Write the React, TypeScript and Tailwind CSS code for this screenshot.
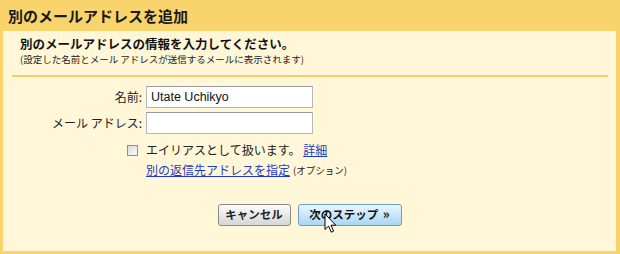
import React from "react";

const jp = "font-['Noto_Sans_CJK_JP','Noto_Sans',sans-serif]";
const link = "text-[#1f3bc6] underline";

/** Windows-style arrow pointer hovering over the primary button. */
function Pointer() {
  return (
    <svg
      className="pointer-events-none absolute left-[324px] top-[213px]"
      width="13"
      height="21"
      viewBox="0 0 13 21"
    >
      <path
        d="M1 1 L1 16.5 L4.6 13 L7.2 19.2 L9.6 18.2 L7 12.2 L11.8 12.2 Z"
        fill="#fff"
        stroke="#000"
        strokeWidth="1"
        strokeLinejoin="round"
      />
    </svg>
  );
}

function Field({ label, value }: { label: string; value?: string }) {
  return (
    <div className="flex items-center">
      <label className="w-[140px] pr-[1px] text-right text-[12px] text-[#222]">{label}</label>
      <input
        readOnly
        value={value ?? ""}
        className="ml-[3px] h-[22px] w-[167px] border border-[#b7b7b7] border-t-[#9a9a9a] bg-white px-[4px] font-['Liberation_Sans',sans-serif] text-[12.5px] text-[#111] outline-none"
      />
    </div>
  );
}

export default function App() {
  return (
    <div className={`relative flex h-[254px] w-[620px] flex-col bg-[#f9d36b] ${jp}`}>
      <div className="flex h-[31px] items-center px-[8px] pt-[1px] text-[15px] font-bold text-[#1a1a1a]">
        別のメールアドレスを追加
      </div>

      <div className="mb-[3px] ml-[3px] mr-[4px] flex flex-1 flex-col bg-[#fff7d7]">
        <div className="px-[17px] pt-[4px]">
          <h2 className="text-[12.5px] font-bold leading-[17px] text-[#111]">
            別のメールアドレスの情報を入力してください。
          </h2>
          <p className="mt-[1px] text-[9.5px] leading-[12px] text-[#222]">
            (設定した名前とメール アドレスが送信するメールに表示されます)
          </p>
        </div>

        <div className="ml-[9px] mr-[8px] mt-[10px] h-[2px] bg-[#f4cf69]" />

        <div className="mt-[9px] flex flex-col gap-[4px]">
          <Field label="名前:" value="Utate Uchikyo" />
          <Field label="メール アドレス:" />
        </div>

        <div className="mt-[7px] flex items-center">
          <div className="flex w-[140px] justify-end pr-[5px]">
            <span className="h-[11px] w-[11px] border border-[#8f8f8f] bg-gradient-to-br from-[#dcdcdc] to-[#fafafa]" />
          </div>
          <span className="ml-[3px] text-[12px] text-[#222]">
            エイリアスとして扱います。 <a className={link}>詳細</a>
          </span>
        </div>

        <div className="mt-[2px] flex items-center pl-[143px]">
          <a className={`${link} text-[12px]`}>別の返信先アドレスを指定</a>
          <span className="ml-[3px] text-[9.5px] text-[#222]">(オプション)</span>
        </div>

        <div className="mt-[25px] flex justify-center gap-[7px]">
          <button className="h-[22px] w-[73px] rounded-[3px] border border-[#8a8a8a] bg-gradient-to-b from-[#fbfbfb] to-[#d6d6d6] text-[11.5px] font-bold text-[#222]">
            キャンセル
          </button>
          <button className="h-[22px] w-[104px] rounded-[3px] border border-[#6f9cc6] bg-gradient-to-b from-[#eaf6fd] to-[#a9d6f6] text-[11.5px] font-bold text-[#111]">
            次のステップ <span className="ml-[2px] text-[13px] leading-none">»</span>
          </button>
        </div>
      </div>

      <Pointer />
    </div>
  );
}
